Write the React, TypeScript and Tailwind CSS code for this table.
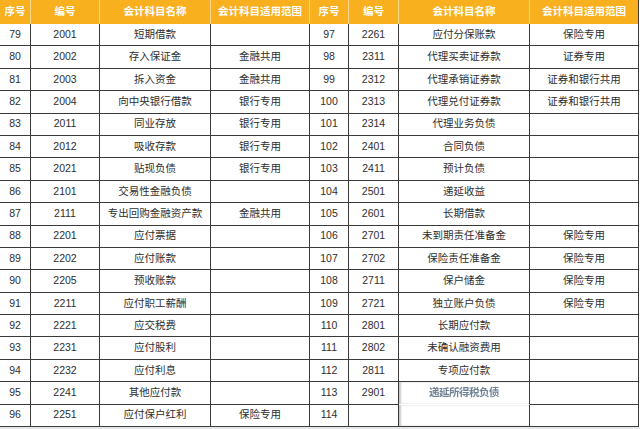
import React from 'react';

type Row = [string, string, string, string];

const left: Row[] = [
  ['79', '2001', '短期借款', ''],
  ['80', '2002', '存入保证金', '金融共用'],
  ['81', '2003', '拆入资金', '金融共用'],
  ['82', '2004', '向中央银行借款', '银行专用'],
  ['83', '2011', '同业存放', '银行专用'],
  ['84', '2012', '吸收存款', '银行专用'],
  ['85', '2021', '贴现负债', '银行专用'],
  ['86', '2101', '交易性金融负债', ''],
  ['87', '2111', '专出回购金融资产款', '金融共用'],
  ['88', '2201', '应付票据', ''],
  ['89', '2202', '应付账款', ''],
  ['90', '2205', '预收账款', ''],
  ['91', '2211', '应付职工薪酬', ''],
  ['92', '2221', '应交税费', ''],
  ['93', '2231', '应付股利', ''],
  ['94', '2232', '应付利息', ''],
  ['95', '2241', '其他应付款', ''],
  ['96', '2251', '应付保户红利', '保险专用'],
];

const right: Row[] = [
  ['97', '2261', '应付分保账款', '保险专用'],
  ['98', '2311', '代理买卖证券款', '证券专用'],
  ['99', '2312', '代理承销证券款', '证券和银行共用'],
  ['100', '2313', '代理兑付证券款', '证券和银行共用'],
  ['101', '2314', '代理业务负债', ''],
  ['102', '2401', '合同负债', ''],
  ['103', '2411', '预计负债', ''],
  ['104', '2501', '递延收益', ''],
  ['105', '2601', '长期借款', ''],
  ['106', '2701', '未到期责任准备金', '保险专用'],
  ['107', '2702', '保险责任准备金', '保险专用'],
  ['108', '2711', '保户储金', '保险专用'],
  ['109', '2721', '独立账户负债', '保险专用'],
  ['110', '2801', '长期应付款', ''],
  ['111', '2802', '未确认融资费用', ''],
  ['112', '2811', '专项应付款', ''],
  ['113', '2901', '递延所得税负债', ''],
  ['114', '', '', ''],
];

const headers = ['序号', '编号', '会计科目名称', '会计科目适用范围', '序号', '编号', '会计科目名称', '会计科目适用范围'];

const cell = 'flex items-center justify-center border-r border-b border-[#3a3a3a] whitespace-nowrap';

export default function App() {
  return (
    <div
      className="w-[640px] h-[429px] bg-[#e6e9ec] overflow-hidden text-[#2e2e2e]"
      style={{ fontFamily: '"Liberation Sans", "Noto Sans CJK SC", sans-serif' }}
    >
      <div className="grid grid-cols-[31px_69px_111px_99px_39px_50px_131px_109px] grid-rows-[24px_repeat(18,22.4px)] w-[640px] bg-white text-[10.5px]">
        {headers.map((h, i) => (
          <div
            key={i}
            className={`flex items-center justify-center bg-[#f8b01f] text-white font-bold whitespace-nowrap ${
              i < 7 ? 'border-r border-[#fcd888]' : 'border-r border-[#3a3a3a]'
            }`}
          >
            {h}
          </div>
        ))}
        {left.map((l, r) => {
          const rr = right[r];
          const isBlur = r === 16;
          const isLast = r === 17;
          return (
            <React.Fragment key={r}>
              <div className={cell}>{l[0]}</div>
              <div className={cell}>{l[1]}</div>
              <div className={cell}>{l[2]}</div>
              <div className={cell}>{l[3]}</div>
              <div className={cell}>{rr[0]}</div>
              <div className={cell}>{rr[1]}</div>
              <div
                className={`${cell} ${isBlur ? 'border-b-transparent shadow-[inset_2px_0_2px_rgba(90,100,110,0.35)]' : ''} ${
                  isLast ? 'shadow-[inset_2px_0_2px_rgba(90,100,110,0.35)]' : ''
                }`}
              >
                {isBlur ? (
                  <span className="text-[#6f8194] blur-[0.6px] tracking-[-0.5px] font-bold">{rr[2]}</span>
                ) : (
                  rr[2]
                )}
              </div>
              <div className={cell}>{rr[3]}</div>
            </React.Fragment>
          );
        })}
      </div>
    </div>
  );
}
